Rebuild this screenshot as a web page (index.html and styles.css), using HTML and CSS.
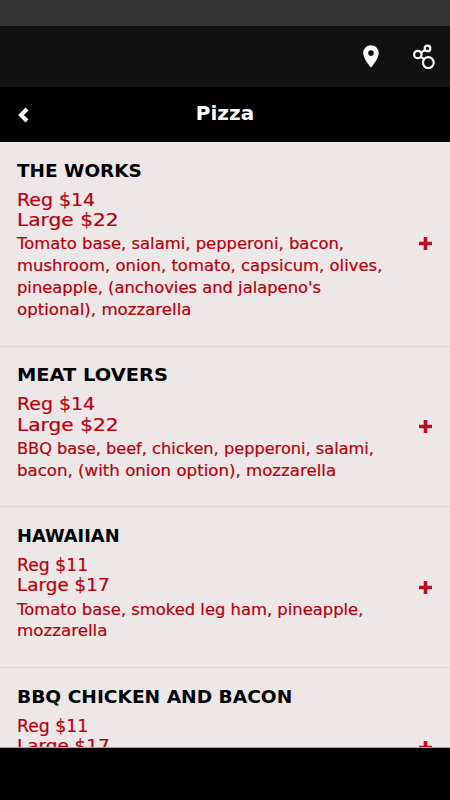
FILE: index.html
```html
<!DOCTYPE html>
<html lang="en">
<head>
<meta charset="utf-8">
<title>Pizza</title>
<link rel="stylesheet" href="styles.css">
</head>
<body>
<div class="status"></div>
<header class="toolbar">
  <svg class="pin" viewBox="0 0 16 23"><path fill="#fff" fill-rule="evenodd" d="M8 .3C3.700.3.2 3.700.2 8c0 5.800 7.800 14.600 7.800 14.600S15.800 13.800 15.800 8C15.800 3.700 12.300.3 8 .3zM8 5.300a2.800 2.800 0 1 1 0 5.600 2.800 2.800 0 0 1 0-5.600z"/></svg>
  <svg class="share" viewBox="0 0 22 25" fill="none" stroke="#fff" stroke-width="2.200"><circle cx="14.500" cy="4.400" r="2.800"/><circle cx="4.800" cy="10.500" r="3.700"/><circle cx="15.300" cy="18.600" r="5.400"/><path d="M8.100 8.600l4-2.700M7.800 12.900l3.200 2.300"/></svg>
</header>
<nav class="titlebar">
  <svg class="back" viewBox="0 0 11 16"><path d="M9 2L3 8l6 6" fill="none" stroke="#fff" stroke-width="4"/></svg>
  <h1><span class="fit" data-width="58">Pizza</span></h1>
</nav>
<main class="menu">
  <section class="item">
    <div class="info">
      <h2><span class="fit" data-width="125">THE WORKS</span></h2>
      <div class="price"><span class="fit" data-width="78">Reg $14</span><span class="fit" data-width="102">Large $22</span></div>
      <div class="desc"><span class="fit" data-width="327">Tomato base, salami, pepperoni, bacon,</span><span class="fit" data-width="365">mushroom, onion, tomato, capsicum, olives,</span><span class="fit" data-width="304">pineapple, (anchovies and jalapeno's</span><span class="fit" data-width="175">optional), mozzarella</span></div>
    </div>
    <svg class="plus" viewBox="0 0 13 13"><path d="M6.500 0v13M0 6.500h13"/></svg>
  </section>
  <section class="item">
    <div class="info">
      <h2><span class="fit" data-width="151">MEAT LOVERS</span></h2>
      <div class="price"><span class="fit" data-width="78">Reg $14</span><span class="fit" data-width="102">Large $22</span></div>
      <div class="desc"><span class="fit" data-width="357">BBQ base, beef, chicken, pepperoni, salami,</span><span class="fit" data-width="319">bacon, (with onion option), mozzarella</span></div>
    </div>
    <svg class="plus" viewBox="0 0 13 13"><path d="M6.500 0v13M0 6.500h13"/></svg>
  </section>
  <section class="item">
    <div class="info">
      <h2><span class="fit" data-width="103">HAWAIIAN</span></h2>
      <div class="price"><span class="fit" data-width="71">Reg $11</span><span class="fit" data-width="93">Large $17</span></div>
      <div class="desc"><span class="fit" data-width="346">Tomato base, smoked leg ham, pineapple,</span><span class="fit" data-width="90">mozzarella</span></div>
    </div>
    <svg class="plus" viewBox="0 0 13 13"><path d="M6.500 0v13M0 6.500h13"/></svg>
  </section>
  <section class="item">
    <div class="info">
      <h2><span class="fit" data-width="275">BBQ CHICKEN AND BACON</span></h2>
      <div class="price"><span class="fit" data-width="71">Reg $11</span><span class="fit" data-width="93">Large $17</span></div>
    </div>
    <svg class="plus" viewBox="0 0 13 13"><path d="M6.500 0v13M0 6.500h13"/></svg>
  </section>
</main>
<script src="fit.js"></script>
</body>
</html>
```
FILE: styles.css
```css
* { box-sizing: border-box; }
body {
  margin: 0;
  width: 450px;
  height: 800px;
  overflow: hidden;
  display: flex;
  flex-direction: column;
  background: #000;
  font-family: "DejaVu Sans", sans-serif;
}
.status { height: 26px; background: #333; flex: none; }
.toolbar {
  height: 61px;
  flex: none;
  background: #111;
  display: flex;
  justify-content: flex-end;
  align-items: center;
  gap: 34px;
  padding-right: 15px;
}
.pin { width: 16px; height: 23px; }
.share { width: 22px; height: 25px; }
.titlebar {
  height: 55px;
  flex: none;
  display: grid;
  grid-template-columns: 60px 1fr 60px;
  align-items: center;
  color: #fff;
}
.back { width: 11px; height: 16px; margin-left: 18px; }
h1 { margin: 0; padding-bottom: 3px; font-size: 20px; line-height: 52px; display: flex; justify-content: center; }
h1 .fit { transform-origin: center; }
.menu {
  height: 606px;
  flex: none;
  overflow: hidden;
  background: #ede7e7;
  border-bottom: 1px solid #aaa5a5;
}
.item {
  height: 160.7px;
  display: flex;
  align-items: center;
  justify-content: space-between;
  padding-right: 18px;
  border-bottom: 1px solid #ddd5d6;
}
.item:first-child { height: 204.6px; }
.info { align-self: flex-start; padding: 16.6px 0 0 17px; }
.fit { display: block; width: max-content; white-space: nowrap; transform-origin: left; }
h2 { margin: 0; font-size: 18px; line-height: 24px; color: #000; }
.price { margin-top: 7px; font-size: 17px; line-height: 20.5px; color: #b8000c; -webkit-text-stroke: 0.2px #b8000c; }
.desc { margin-top: 3.8px; font-size: 15px; line-height: 21.8px; color: #b8000c; -webkit-text-stroke: 0.2px #b8000c; }
.plus { width: 13px; height: 13px; flex: none; stroke: #b90f1d; stroke-width: 3.6; }
```
FILE: fit.js
```js
// Stretches each line of lettering horizontally to its display width.
document.querySelectorAll('.fit').forEach(function (line) {
  line.style.transform = 'scaleX(' + line.dataset.width / line.offsetWidth + ')';
});
```
